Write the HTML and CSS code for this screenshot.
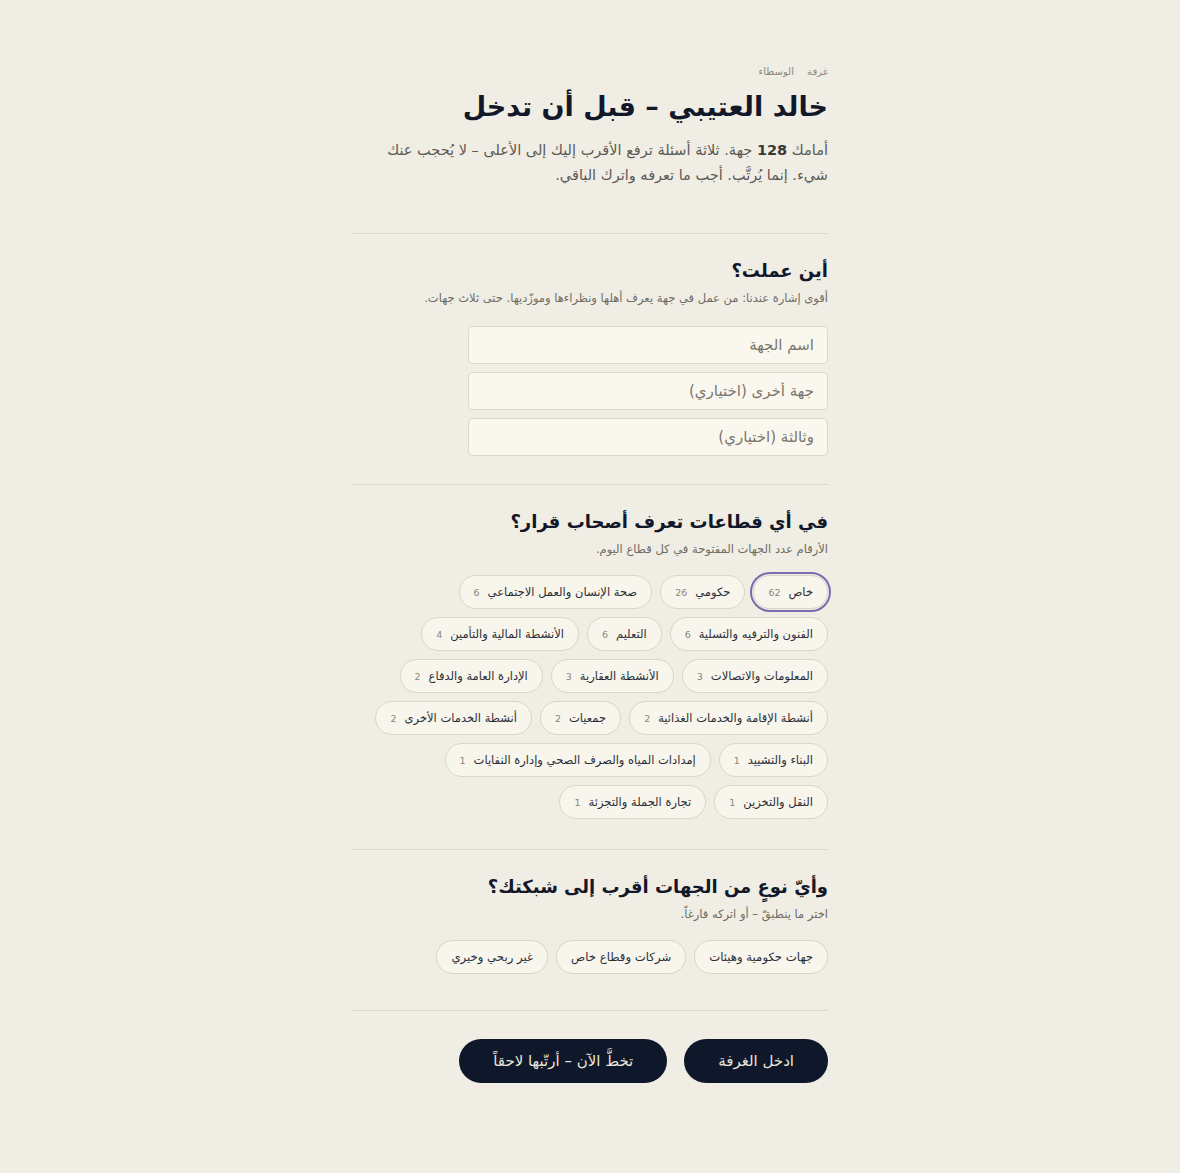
FILE: index.html
```html
<!DOCTYPE html>
<html lang="ar" dir="rtl">
<head>
<meta charset="utf-8">
<title>غرفة الوسطاء</title>
<link rel="stylesheet" href="styles.css">
</head>
<body>
<main class="page">
  <header class="intro">
    <div class="eyebrow">غرفة الوسطاء</div>
    <h1 class="title">خالد العتيبي – قبل أن تدخل</h1>
    <p class="lead">أمامك <b>128</b> جهة. ثلاثة أسئلة ترفع الأقرب إليك إلى الأعلى – لا يُحجب عنك شيء. إنما يُرتَّب. أجب ما تعرفه واترك الباقي.</p>
  </header>

  <section class="block">
    <h2 class="q">أين عملت؟</h2>
    <p class="hint">أقوى إشارة عندنا: من عمل في جهة يعرف أهلها ونظراءها وموزّديها. حتى ثلاث جهات.</p>
    <div class="fields">
      <input class="field" type="text" placeholder="اسم الجهة">
      <input class="field" type="text" placeholder="جهة أخرى (اختياري)">
      <input class="field" type="text" placeholder="وثالثة (اختياري)">
    </div>
  </section>

  <section class="block">
    <h2 class="q">في أي قطاعات تعرف أصحاب قرار؟</h2>
    <p class="hint">الأرقام عدد الجهات المفتوحة في كل قطاع اليوم.</p>
    <div class="chips">
      <button class="chip is-focus">خاص <span class="n">62</span></button>
      <button class="chip">حكومي <span class="n">26</span></button>
      <button class="chip">صحة الإنسان والعمل الاجتماعي <span class="n">6</span></button>
      <button class="chip">الفنون والترفيه والتسلية <span class="n">6</span></button>
      <button class="chip">التعليم <span class="n">6</span></button>
      <button class="chip">الأنشطة المالية والتأمين <span class="n">4</span></button>
      <button class="chip">المعلومات والاتصالات <span class="n">3</span></button>
      <button class="chip">الأنشطة العقارية <span class="n">3</span></button>
      <button class="chip">الإدارة العامة والدفاع <span class="n">2</span></button>
      <button class="chip">أنشطة الإقامة والخدمات الغذائية <span class="n">2</span></button>
      <button class="chip">جمعيات <span class="n">2</span></button>
      <button class="chip">أنشطة الخدمات الأخرى <span class="n">2</span></button>
      <button class="chip">البناء والتشييد <span class="n">1</span></button>
      <button class="chip">إمدادات المياه والصرف الصحي وإدارة النفايات <span class="n">1</span></button>
      <button class="chip">النقل والتخزين <span class="n">1</span></button>
      <button class="chip">تجارة الجملة والتجزئة <span class="n">1</span></button>
    </div>
  </section>

  <section class="block block-last">
    <h2 class="q">وأيّ نوعٍ من الجهات أقرب إلى شبكتك؟</h2>
    <p class="hint">اختر ما ينطبقّ – أو اتركه فارغاً.</p>
    <div class="chips">
      <button class="chip chip-type">جهات حكومية وهيئات</button>
      <button class="chip chip-type">شركات وقطاع خاص</button>
      <button class="chip chip-type">غير ربحي وخيري</button>
    </div>
  </section>

  <footer class="actions">
    <button class="btn">ادخل الغرفة</button>
    <button class="btn">تخطَّ الآن – أرتّبها لاحقاً</button>
  </footer>
</main>
</body>
</html>
```

FILE: styles.css
```css
* { box-sizing: border-box; }

html, body {
  margin: 0;
  padding: 0;
  background: #f0ede4;
}

body {
  font-family: "DejaVu Sans", "Noto Sans", sans-serif;
  color: #141a2b;
}

.page {
  width: 476px;
  margin: 0 auto;
  padding: 66px 0 80px;
}

.intro {
  padding-bottom: 45px;
  border-bottom: 1px solid #ddd7c9;
}

.eyebrow {
  font-size: 10px;
  line-height: 12px;
  word-spacing: 10px;
  letter-spacing: 2px;
  color: #8b877d;
  margin-bottom: 10px;
}

.title {
  margin: 0 0 12px;
  font-size: 27px;
  line-height: 38px;
  font-weight: 700;
  color: #121829;
}

.lead {
  margin: 0;
  font-size: 14.5px;
  line-height: 25px;
  color: #5c5a55;
}

.lead b { color: #3a3935; }

.block {
  padding: 22px 0 30px;
  border-bottom: 1px solid #ddd7c9;
}

.block-last { padding-bottom: 36px; }

.q {
  margin: 0;
  font-size: 18px;
  line-height: 30px;
  font-weight: 700;
  color: #121829;
}

.hint {
  margin: 3px 0 0;
  font-size: 11.5px;
  line-height: 18px;
  color: #6f6c65;
}

.fields {
  margin-top: 19px;
  display: flex;
  flex-direction: column;
  gap: 8px;
  width: 360px;
}

.block:first-of-type { padding-bottom: 28px; }

.field {
  height: 38px;
  padding: 0 13px;
  font-family: inherit;
  font-size: 15px;
  color: #141a2b;
  background: #faf7ee;
  border: 1px solid #ddd7c9;
  border-radius: 5px;
  outline: none;
}

.field::placeholder { color: #7a776f; }

.chips {
  margin-top: 17px;
  display: flex;
  flex-wrap: wrap;
  gap: 8px;
}

.chip {
  height: 34px;
  padding: 0 14px;
  font-family: inherit;
  font-size: 11.5px;
  color: #2a2e38;
  background: #f8f5ec;
  border: 1px solid #ddd5c4;
  border-radius: 17px;
  display: inline-flex;
  align-items: center;
  gap: 8px;
  cursor: pointer;
}

.chip-type { font-size: 11.7px; }

.chip .n {
  font-size: 9.5px;
  color: #8a867c;
}

.chip.is-focus {
  outline: 2px solid #7a6cb0;
  outline-offset: 1px;
}

.actions {
  padding-top: 28px;
  display: flex;
  gap: 17px;
}

.btn {
  height: 44px;
  padding: 0 34px;
  font-family: inherit;
  font-size: 15px;
  color: #e9e5da;
  background: #0f172a;
  border: none;
  border-radius: 22px;
  cursor: pointer;
}
```
